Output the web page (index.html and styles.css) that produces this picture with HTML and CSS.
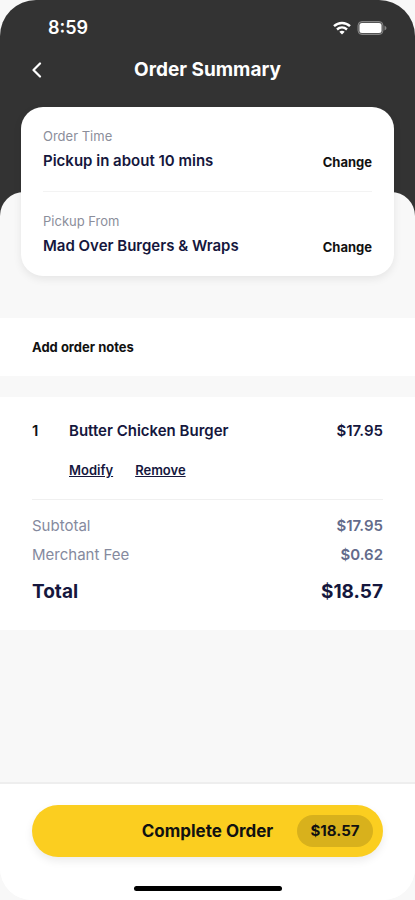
FILE: index.html
```html
<!DOCTYPE html>
<html lang="en">
<head>
<meta charset="utf-8">
<meta name="viewport" content="width=device-width, initial-scale=1">
<title>Order Summary</title>
<link rel="stylesheet" href="styles.css">
</head>
<body>
<div class="screen">
  <header class="header">
    <div class="status">
      <span class="clock">8:59</span>
      <span class="indicators">
        <svg width="18" height="14" viewBox="0 0 18 14" fill="none" stroke="#fff" stroke-width="2.4" aria-hidden="true">
          <path d="M1 5.2C5.5.9 12.5.9 17 5.2"/>
          <path d="M4 8.5c2.900-2.600 7.100-2.600 10 0"/>
          <path d="M6.300 10.700Q9 8.700 11.700 10.700L9 13.600Z" fill="#fff" stroke="none"/>
        </svg>
        <svg width="30" height="16" viewBox="0 0 30 16" aria-hidden="true">
          <rect x="1" y="1.500" width="25" height="13" rx="4" fill="#555" stroke="#858585"/>
          <rect x="2.500" y="3" width="22" height="10" rx="2.500" fill="#fff"/>
          <path d="M27.500 5.500q2 1 2 2.500t-2 2.500z" fill="#858585"/>
        </svg>
      </span>
    </div>
    <nav class="nav">
      <button class="back" type="button" aria-label="Back">
        <svg width="12" height="16" viewBox="0 0 12 16" fill="none" stroke="#fff" stroke-width="2.200" stroke-linecap="round" stroke-linejoin="round" aria-hidden="true"><path d="M9 1.500 2.500 8 9 14.500"/></svg>
      </button>
      <h1 class="title">Order Summary</h1>
    </nav>
  </header>

  <main class="sheet">
    <section class="card">
      <div class="detail">
        <div>
          <p class="label">Order Time</p>
          <p class="value">Pickup in about 10 mins</p>
        </div>
        <button class="change" type="button">Change</button>
      </div>
      <div class="detail">
        <div>
          <p class="label">Pickup From</p>
          <p class="value">Mad Over Burgers &amp; Wraps</p>
        </div>
        <button class="change" type="button">Change</button>
      </div>
    </section>

    <button class="notes" type="button">Add order notes</button>

    <section class="order">
      <div class="item">
        <span class="quantity">1</span>
        <span class="name">Butter Chicken Burger</span>
        <span class="price">$17.95</span>
        <div class="actions">
          <a href="#modify">Modify</a>
          <a href="#remove">Remove</a>
        </div>
      </div>
      <dl class="totals">
        <div class="line"><dt>Subtotal</dt><dd>$17.95</dd></div>
        <div class="line"><dt>Merchant Fee</dt><dd>$0.62</dd></div>
        <div class="line total"><dt>Total</dt><dd>$18.57</dd></div>
      </dl>
    </section>
  </main>

  <footer class="footer">
    <button class="complete" type="button">
      <span class="complete-label">Complete Order</span>
      <span class="amount">$18.57</span>
    </button>
    <div class="home"></div>
  </footer>
</div>
</body>
</html>
```
FILE: styles.css
```css
* {
  box-sizing: border-box;
  margin: 0;
  padding: 0;
}

body {
  background: #f8f8f8;
  color: #15173d;
  font-family: Inter, "Liberation Sans", sans-serif;
  font-size: 15px;
  line-height: 20px;
}

button {
  border: 0;
  background: none;
  color: #111;
  font: inherit;
  cursor: pointer;
}

.screen {
  display: flex;
  flex-direction: column;
  min-height: 100vh;
  border-radius: 36px 36px 32px 32px;
  background: linear-gradient(#333 50%, #fff 50%);
  overflow: hidden;
}

.header {
  padding: 16px 28px 108px;
  color: #fff;
}

.status {
  display: flex;
  align-items: center;
  justify-content: space-between;
  height: 24px;
  padding-left: 20px;
}

.clock {
  font-size: 18px;
  font-weight: 600;
}

.indicators {
  display: flex;
  align-items: center;
  gap: 6px;
}

.nav {
  display: grid;
  grid-template-columns: 24px 1fr 24px;
  align-items: center;
  height: 28px;
  margin-top: 16px;
}

.back {
  display: flex;
  align-items: center;
  height: 28px;
  padding-left: 3px;
}

.title {
  font-size: 19px;
  font-weight: 700;
  line-height: 28px;
  text-align: center;
}

.sheet {
  flex: 1;
  border-radius: 24px 24px 0 0;
  background: #f8f8f8;
}

.card {
  margin: -85px 21px 42px;
  padding: 0 22px;
  border-radius: 22px;
  background: #fff;
  box-shadow: 0 3px 8px rgba(0, 0, 0, 0.08);
}

.detail {
  display: flex;
  align-items: flex-end;
  justify-content: space-between;
  padding: 20px 0;
}

.detail + .detail {
  border-top: 1px solid #f3f3f3;
}

.label {
  margin-bottom: 6px;
  color: #8b8e9b;
  font-size: 13px;
  line-height: 18px;
}

.value {
  font-weight: 600;
}

.change {
  font-size: 13px;
  font-weight: 700;
  line-height: 18px;
}

.notes {
  display: block;
  width: 100%;
  padding: 20px 32px;
  background: #fff;
  font-size: 13px;
  font-weight: 700;
  line-height: 18px;
  text-align: left;
}

.order {
  margin-top: 21px;
  padding: 24px 32px 20px;
  background: #fff;
}

.item {
  display: grid;
  grid-template-columns: 37px 1fr auto;
  row-gap: 20px;
  padding-bottom: 20px;
  border-bottom: 1px solid #f0f0f0;
  font-weight: 600;
}

.quantity {
  color: #111;
}

.actions {
  display: flex;
  grid-column: 2 / -1;
  gap: 22px;
  font-size: 13px;
  line-height: 18px;
}

.actions a {
  color: inherit;
}

.totals {
  display: grid;
  gap: 9px;
  padding-top: 16px;
}

.line {
  display: flex;
  justify-content: space-between;
  color: #858a9e;
}

.line dd {
  color: #636b8b;
  font-weight: 600;
}

.total,
.total dd {
  color: #15173d;
  font-size: 19px;
  font-weight: 700;
  line-height: 28px;
}

.total {
  padding: 4px 0;
}

.footer {
  padding: 21px 32px 9px;
  border-top: 2px solid #eee;
  background: #fff;
}

.complete {
  display: grid;
  grid-template-columns: 76px 1fr 76px;
  align-items: center;
  width: 100%;
  height: 52px;
  padding: 0 10px;
  border-radius: 26px;
  background: #fbce20;
  box-shadow: 0 4px 8px rgba(0, 0, 0, 0.08);
  font-weight: 700;
}

.complete-label {
  grid-column: 2;
  font-size: 17px;
}

.amount {
  border-radius: 16px;
  background: #d8b11c;
  line-height: 32px;
}

.home {
  width: 148px;
  height: 5px;
  margin: 29px auto 0;
  border-radius: 3px;
  background: #000;
}
```
